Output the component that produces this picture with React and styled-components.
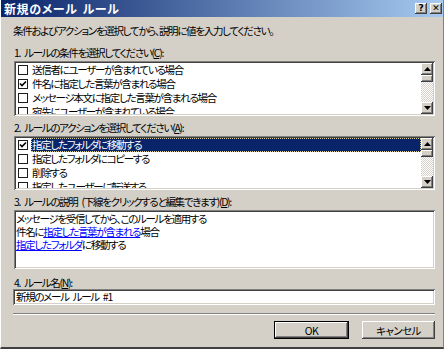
import React from "react";
import styled, { createGlobalStyle } from "styled-components";

const GlobalStyle = createGlobalStyle`
  html, body { margin: 0; padding: 0; background: #d4d0c8; }
  body {
    font-family: "Noto Sans CJK JP", "Noto Sans", sans-serif;
    font-size: 10.5px;
    font-feature-settings: "palt";
    color: #000;
  }
  * { box-sizing: border-box; }
`;

const Window = styled.div`
  width: 444px;
  height: 349px;
  background: #d4d0c8;
  display: flex;
  flex-direction: column;
  border-left: 1px solid #ffffff;
  border-right: 1px solid #808080;
  border-bottom: 2px solid #404040;
`;

const TitleBar = styled.div`
  height: 17px;
  flex: none;
  display: flex;
  align-items: center;
  padding: 0 1px 0 3px;
  background: linear-gradient(to right, #0a246a, #a6caf0);
  color: #fff;
  font-weight: bold;
  font-size: 12px;
  letter-spacing: 0.6px;
  word-spacing: 2px;
`;

const TitleText = styled.div`
  flex: 1;
  line-height: 17px;
  white-space: nowrap;
`;

const CaptionButtons = styled.div`
  display: flex;
  gap: 3px;
`;

const CaptionButton = styled.div`
  width: 12px;
  height: 11px;
  background: #d4d0c8;
  box-shadow: inset -1px -1px #404040, inset 1px 1px #ffffff, inset -2px -2px #808080;
  color: #000;
  font-family: "DejaVu Sans", sans-serif;
  font-weight: bold;
  font-size: 9px;
  line-height: 11px;
  text-align: center;
  letter-spacing: 0;
  word-spacing: 0;
`;

const Body = styled.div`
  flex: 1;
  display: flex;
  flex-direction: column;
  padding: 7px 8px 0 12px;
  letter-spacing: -1.3px;
  word-spacing: 3px;
`;

const Intro = styled.div`
  line-height: 13px;
  white-space: nowrap;
`;

const Section = styled.div`
  margin-top: ${(p) => p.$top}px;
  display: flex;
  flex-direction: column;
`;

const Label = styled.div`
  line-height: 13px;
  margin-bottom: ${(p) => (p.$tight ? 0 : 2)}px;
  white-space: nowrap;
  padding-left: 1px;
`;

const Sunken = styled.div`
  background: #fff;
  padding: 2px;
  box-shadow: inset 1px 1px #808080, inset -1px -1px #ffffff,
    inset 2px 2px #404040, inset -2px -2px #d4d0c8;
  margin-left: 1px;
`;

const ListBox = styled(Sunken)`
  height: ${(p) => p.$h}px;
  display: flex;
`;

const Items = styled.div`
  flex: 1;
  overflow: hidden;
`;

const Row = styled.div`
  height: 14px;
  display: flex;
  align-items: center;
  padding-left: 2px;
  white-space: nowrap;
`;

const CheckBox = styled.div`
  width: 10px;
  height: 10px;
  flex: none;
  border: 1px solid #1c1c1c;
  background: #fff;
  margin-right: 3px;
  display: flex;
  align-items: center;
  justify-content: center;
`;

const RowText = styled.div`
  flex: 1;
  height: 14px;
  line-height: 14px;
  padding-left: 1px;
  background: ${(p) => (p.$selected ? "#0a246a" : "transparent")};
  color: ${(p) => (p.$selected ? "#fff" : "#000")};
  outline: ${(p) => (p.$selected ? "1px dotted #d8cf9a" : "none")};
  outline-offset: -1px;
`;

const ScrollBar = styled.div`
  width: 12px;
  flex: none;
  display: flex;
  flex-direction: column;
`;

const ScrollButton = styled.div`
  height: 12px;
  flex: none;
  background: #d4d0c8;
  box-shadow: inset -1px -1px #404040, inset 1px 1px #ffffff, inset -2px -2px #808080;
  display: flex;
  align-items: center;
  justify-content: center;
`;

const Thumb = styled(ScrollButton)`
  height: 7px;
`;

const Track = styled.div`
  flex: 1;
  background: repeating-conic-gradient(#ffffff 0 25%, #d4d0c8 0 50%) 0 0 / 2px 2px;
`;

const DescBox = styled(Sunken)`
  height: 59px;
`;

const DescLine = styled.div`
  line-height: 13px;
  white-space: nowrap;
`;

const Link = styled.span`
  color: #0000ff;
  text-decoration: underline;
`;

const NameInput = styled(Sunken)`
  height: 16px;
  margin-left: 0;
  padding: 2px 3px;
  line-height: 12px;
  white-space: nowrap;
`;

const Separator = styled.div`
  margin-top: 8px;
  height: 2px;
  border-top: 1px solid #808080;
  border-bottom: 1px solid #ffffff;
`;

const ButtonRow = styled.div`
  margin-top: 6px;
  display: flex;
  justify-content: flex-end;
  gap: 13px;
`;

const Button = styled.div`
  width: ${(p) => p.$w}px;
  height: 18px;
  display: flex;
  align-items: center;
  justify-content: center;
  background: #d4d0c8;
  border: ${(p) => (p.$default ? "1px solid #000" : "none")};
  box-shadow: inset -1px -1px #404040, inset 1px 1px #ffffff,
    inset -2px -2px #808080;
  letter-spacing: -0.6px;
`;

const Arrow = ({ up }) => (
  <svg width="7" height="4" viewBox="0 0 7 4">
    <polygon points={up ? "3.5,0 7,4 0,4" : "0,0 7,0 3.5,4"} fill="#000" />
  </svg>
);

const Check = ({ checked }) => (
  <CheckBox>
    {checked && (
      <svg width="8" height="8" viewBox="0 0 8 8">
        <path d="M1 3.5 L3 5.5 L7 1.5" stroke="#000" strokeWidth="1.6" fill="none" />
      </svg>
    )}
  </CheckBox>
);

const CheckList = ({ items, height }) => (
  <ListBox $h={height}>
    <Items>
      {items.map((it) => (
        <Row key={it.text}>
          <Check checked={it.checked} />
          <RowText $selected={it.selected}>{it.text}</RowText>
        </Row>
      ))}
    </Items>
    <ScrollBar>
      <ScrollButton><Arrow up /></ScrollButton>
      <Thumb />
      <Track />
      <ScrollButton><Arrow /></ScrollButton>
    </ScrollBar>
  </ListBox>
);

const conditions = [
  { text: "送信者にユーザーが含まれている場合" },
  { text: "件名に指定した言葉が含まれる場合", checked: true },
  { text: "メッセージ本文に指定した言葉が含まれる場合" },
  { text: "宛先にユーザーが含まれている場合" },
];

const actions = [
  { text: "指定したフォルダに移動する", checked: true, selected: true },
  { text: "指定したフォルダにコピーする" },
  { text: "削除する" },
  { text: "指定したユーザーに転送する" },
];

export default function App() {
  return (
    <>
      <GlobalStyle />
      <Window>
        <TitleBar>
          <TitleText>新規のメール ルール</TitleText>
          <CaptionButtons>
            <CaptionButton>?</CaptionButton>
            <CaptionButton>✕</CaptionButton>
          </CaptionButtons>
        </TitleBar>
        <Body>
          <Intro>条件およびアクションを選択してから、説明に値を入力してください。</Intro>
          <Section $top={9}>
            <Label>1. ルールの条件を選択してください(<u>C</u>):</Label>
            <CheckList items={conditions} height={55} />
          </Section>
          <Section $top={5}>
            <Label>2. ルールのアクションを選択してください(<u>A</u>):</Label>
            <CheckList items={actions} height={54} />
          </Section>
          <Section $top={5}>
            <Label>3. ルールの説明 (下線をクリックすると編集できます)(<u>D</u>):</Label>
            <DescBox>
              <DescLine>メッセージを受信してから、このルールを適用する</DescLine>
              <DescLine>件名に<Link>指定した言葉が含まれる</Link>場合</DescLine>
              <DescLine><Link>指定したフォルダ</Link>に移動する</DescLine>
            </DescBox>
          </Section>
          <Section $top={7}>
            <Label $tight>4. ルール名(<u>N</u>):</Label>
            <NameInput>新規のメール ルール #1</NameInput>
          </Section>
          <Separator />
          <ButtonRow>
            <Button $w={75} $default>OK</Button>
            <Button $w={73}>キャンセル</Button>
          </ButtonRow>
        </Body>
      </Window>
    </>
  );
}
